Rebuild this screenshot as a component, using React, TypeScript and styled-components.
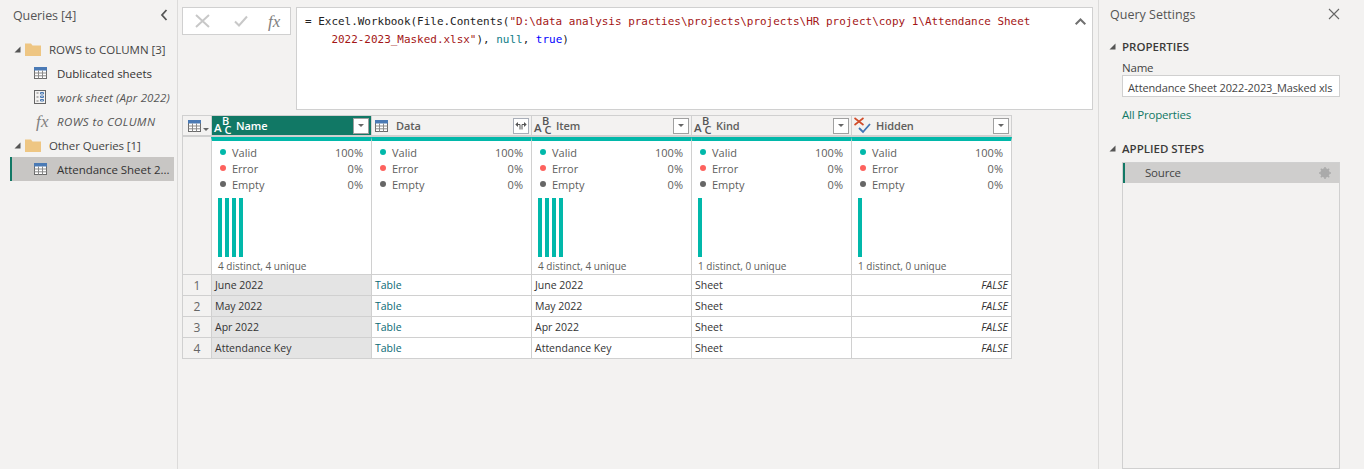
import React from "react";
import styled, { createGlobalStyle } from "styled-components";

const Global = createGlobalStyle`
  html, body { margin: 0; padding: 0; height: 469px; overflow: hidden; background: #f3f2f1; }
  #root { height: 469px; }
  * { box-sizing: border-box; }
  svg { overflow: visible; }
`;
const uiFont = `"Open Sans", "Noto Sans", "Liberation Sans", sans-serif`;
const borderC = "#d0d0d0";

const Page = styled.div`
  display: flex; height: 469px; width: 1364px; overflow: hidden;
  font-family: ${uiFont}; font-size: 11.5px; color: #333; background: #f3f2f1;
`;
const LeftPane = styled.aside`
  width: 178px; flex: none; border-right: 1px solid #dcdbda; padding: 0 3px 0 10px;
`;
const PaneHeader = styled.div`
  display: flex; align-items: center; justify-content: space-between; height: 30px;
  font-size: 12.5px; color: #555; margin-left: 3px; padding-right: 6px; letter-spacing: -0.1px;
`;
const Tree = styled.div`
  margin-top: 7px; display: flex; flex-direction: column;
`;
const FolderRow = styled.div<{ $track: number }>`
  display: flex; align-items: center; height: 24px; padding-left: 4px; gap: 4px; color: #444; white-space: nowrap;
  letter-spacing: ${p => p.$track}px;
  svg:nth-child(2) { margin-right: 4px; }
`;
const QueryRow = styled.div<{ $selected?: boolean; $italic?: boolean; $track: number }>`
  display: flex; align-items: center; height: 24px; padding-left: ${p => (p.$selected ? 22 : 24)}px; gap: 10px;
  white-space: nowrap; letter-spacing: ${p => p.$track}px; overflow: hidden;
  color: ${p => (p.$italic ? "#555" : "#333")};
  font-style: ${p => (p.$italic ? "italic" : "normal")};
  background: ${p => (p.$selected ? "#c8c6c4" : "transparent")};
  border-left: ${p => (p.$selected ? "2px solid #117865" : "none")};
`;
const Main = styled.main`
  width: 921px; flex: none; padding: 7px 5px 0 4px; display: flex; flex-direction: column; gap: 5px;
  border-right: 1px solid #dcdbda;
`;
const FormulaBar = styled.div`
  display: flex; gap: 5px; align-items: flex-start; height: 103px;
`;
const FormulaTools = styled.div`
  width: 109px; height: 28px; background: #fff; border: 1px solid ${borderC};
  display: flex; align-items: center; gap: 24px; padding: 0 0 0 12px;
  svg:last-child { margin-left: -4px; }
`;
const FormulaBox = styled.div`
  flex: 1; height: 103px; background: #fff; border: 1px solid ${borderC}; display: flex; justify-content: space-between;
  padding: 5px 6px 0 8px;
  > svg { margin-top: 5px; }
`;
const Code = styled.div`
  font-family: "DejaVu Sans Mono", "Liberation Mono", monospace; font-size: 10.96px; line-height: 18px; color: #222; white-space: pre;
`;
const Str = styled.span`color: #a31515;`;
const Kw = styled.span`color: #0000ff;`;
const Nul = styled.span`color: #0e7c86;`;
const Grid = styled.div`
  display: grid; grid-template-columns: 28px repeat(4, 160px) 161px; width: 830px;
  border-top: 1px solid ${borderC}; border-left: 1px solid ${borderC};
  grid-template-rows: 21px 138px repeat(4, 21px);
  align-self: flex-start;
`;
const CornerCell = styled.div`
  background: #f3f2f1; border-bottom: 2px solid ${borderC}; display: flex; align-items: center; padding-left: 5px; gap: 2px;
`;
const HeaderCell = styled.div<{ $active?: boolean }>`
  display: flex; align-items: center; padding: 0 1px 0 2px;
  background: ${p => (p.$active ? "#117865" : "#f3f2f1")};
  color: ${p => (p.$active ? "#fff" : "#605e5c")};
  border-left: 1px solid ${borderC};
  border-bottom: 2px solid ${borderC};
  font-weight: 600; font-size: 11px; letter-spacing: -0.1px;
  &:nth-child(6) { border-right: 1px solid ${borderC}; }
`;
const HeaderIcon = styled.span`display: flex; width: 20px; flex: none;`;
const HeaderLabel = styled.span`flex: 1; margin-left: 2px;`;
const FilterButton = styled.div`
  width: 16px; height: 16px; background: #fff; border: 1px solid #a0a0a0; margin-right: 1px; display: flex; align-items: center; justify-content: center;
`;
const ExpandButton = styled(FilterButton)`border-color: #a9aeb8;`;
const IndexProfile = styled.div`
  background: #f3f2f1; border-bottom: 1px solid ${borderC};
`;
const ProfileCell = styled.div<{ $last?: boolean }>`
  background: #fff; border-left: 1px solid ${borderC}; border-bottom: 1px solid ${borderC};
  border-right: ${p => (p.$last ? `1px solid ${borderC}` : "none")};
  border-top: 4px solid #01b8aa;
  display: flex; flex-direction: column; padding: 3px 8px 0 6px; font-size: 11px; color: #605e5c;
`;
const StatRow = styled.div`
  display: flex; align-items: center; height: 16px;
`;
const Dot = styled.span<{ $c: string }>`
  width: 6px; height: 6px; border-radius: 50%; background: ${p => p.$c}; margin: 0 6px 0 2px;
`;
const StatLabel = styled.span`flex: 1;`;
const Bars = styled.div`
  display: flex; gap: 3px; height: 59px; margin-top: 6px;
`;
const Bar = styled.span`width: 4px; background: #01b8aa;`;
const Distinct = styled.div`
  margin-top: 3px; font-size: 10px; color: #605e5c; white-space: nowrap; line-height: 13px;
`;
const RowNum = styled.div`
  background: #f3f2f1; border-bottom: 1px solid ${borderC}; color: #666; font-size: 12px; display: flex; align-items: center; justify-content: center;
`;
const DataCell = styled.div<{ $shaded?: boolean; $link?: boolean; $bool?: boolean; $last?: boolean }>`
  background: ${p => (p.$shaded ? "#e4e4e4" : "#fff")};
  border-left: 1px solid ${borderC}; border-bottom: 1px solid ${borderC};
  border-right: ${p => (p.$last ? `1px solid ${borderC}` : "none")};
  display: flex; align-items: center; padding: 0 3px; font-size: 10.5px;
  color: ${p => (p.$link ? "#0b6a75" : "#333")};
  justify-content: ${p => (p.$bool ? "flex-end" : "flex-start")};
  font-style: ${p => (p.$bool ? "italic" : "normal")};
`;
const RightPane = styled.aside`
  flex: 1; padding: 0 24px 0 10px; display: flex; flex-direction: column;
`;
const SettingsHeader = styled.div`
  display: flex; align-items: center; justify-content: space-between; height: 30px; margin-left: 1px; font-size: 12.5px; color: #555;
`;
const SectionHead = styled.div<{ $gap: number }>`
  display: flex; align-items: center; gap: 6px; font-weight: 600; font-size: 11.5px; color: #3b3a39; margin-top: ${p => p.$gap}px; height: 16px; letter-spacing: 0;
`;
const Body = styled.div`padding-left: 13px;`;
const FieldLabel = styled.div`font-size: 11.5px; color: #444; margin-top: 7px; line-height: 14px; letter-spacing: -0.2px;`;
const NameInput = styled.div`
  width: 218px; height: 22px; background: #fff; border: 1px solid ${borderC}; padding: 3px 5px 0;
  font-size: 11px; line-height: 17px; white-space: nowrap; overflow: hidden; color: #444; letter-spacing: -0.12px;
`;
const PropLink = styled.div`font-size: 11.5px; color: #117865; margin-top: 10px; line-height: 16px; letter-spacing: -0.2px;`;
const Steps = styled.div`
  width: 218px; height: 320px; background: #f3f2f1; border: 1px solid ${borderC}; margin: 5px 0 0 13px;
`;
const StepRow = styled.div`
  height: 20px; background: #cfcecd; border-left: 2px solid #117865; display: flex; align-items: center; justify-content: space-between;
  padding: 0 8px 0 20px; font-size: 11.5px; color: #444; letter-spacing: -0.2px;
`;
const CaretLow = styled.span`display: flex; align-self: flex-end; margin-bottom: 4px;`;
const TableHeaderIcon = styled.span`display: flex; margin-left: 1px;`;

const Caret = () => (
  <svg width="7" height="7" viewBox="0 0 7 7" style={{ flex: "none" }}><path d="M6.5 .5V6.5H.5z" fill="#555" /></svg>
);
const Folder = () => (
  <svg width="16" height="14" viewBox="0 0 16 14">
    <path d="M0 1.5h6l1.5 2H16V14H0z" fill="#eec683" />
  </svg>
);
const TableIcon = () => (
  <svg width="13" height="12" viewBox="0 0 13 12" style={{ flex: "none" }}>
    <rect x="0.5" y="0.5" width="12" height="11" fill="#fff" stroke="#6b6b6b" />
    <rect x="0" y="0" width="13" height="3.5" fill="#4a7ab5" />
    <path d="M4.5 3.5V11.5M8.5 3.5V11.5M0.5 6H12.5M0.5 8.8H12.5" stroke="#8a8a8a" strokeWidth="1" />
  </svg>
);
const SheetIcon = () => (
  <svg width="13" height="14" viewBox="0 0 13 14" style={{ flex: "none" }}>
    <rect x="0.5" y="0.5" width="11" height="13" fill="none" stroke="#666" />
    <path d="M2.5 3h2M2.5 7h2M2.5 11h2" stroke="#777" strokeWidth="1" />
    <path d="M6.5 2.5h3v1.5h-3zM6.5 6h3v1.5h-3zM6.5 9.5h3V11h-3z" fill="none" stroke="#4a7ab5" strokeWidth="1" />
  </svg>
);
const FxIcon = ({ x = 2 }: { x?: number }) => (
  <svg width="13" height="15" viewBox="0 0 13 15" style={{ flex: "none" }}>
    <text x={x} y="12.5" fontFamily="Liberation Serif, serif" fontStyle="italic" fontSize="17" fill="#808080">fx</text>
  </svg>
);
const Chevron = () => (
  <svg width="8" height="12" viewBox="0 0 8 12"><path d="M6.5 1L2 6l4.5 5" fill="none" stroke="#555" strokeWidth="1.8" /></svg>
);
const XMark = () => (
  <svg width="15" height="14" viewBox="0 0 15 14"><path d="M1 1L14 13M14 1L1 13" stroke="#c8c8c8" strokeWidth="2" /></svg>
);
const CheckMark = () => (
  <svg width="14" height="12" viewBox="0 0 14 12"><path d="M1 6.5L5 10.5L13 1.5" fill="none" stroke="#c8c8c8" strokeWidth="2" /></svg>
);
const ChevronUp = () => (
  <svg width="11" height="7" viewBox="0 0 11 7"><path d="M.7 6.3L5.5 1.5l4.8 4.8" fill="none" stroke="#707070" strokeWidth="2" /></svg>
);
const CloseThin = () => (
  <svg width="12" height="12" viewBox="0 0 12 12"><path d="M1 1L11 11M11 1L1 11" stroke="#666" strokeWidth="1.1" /></svg>
);
const AbcIcon = ({ light }: { light?: boolean }) => (
  <svg width="18" height="18" viewBox="0 0 18 18" style={{ flex: "none" }}>
    <g fontFamily="Open Sans, sans-serif" fill={light ? "#fff" : "#555"}>
      <text x="0" y="14.5" fontSize="11.5">A</text>
      <text x="8" y="7.5" fontSize="11">B</text>
      <text x="10.5" y="16.5" fontSize="11">C</text>
    </g>
  </svg>
);
const BoolIcon = () => (
  <svg width="18" height="18" viewBox="0 0 18 18" style={{ flex: "none" }}>
    <path d="M0.5 1L9.5 8M9.5 1L.5 8" stroke="#d04c2a" strokeWidth="1.6" />
    <path d="M5 11l4 4 7-8" fill="none" stroke="#3f75b5" strokeWidth="1.8" />
  </svg>
);
const MiniCaret = () => (
  <svg width="6" height="3" viewBox="0 0 6 3" style={{ flex: "none" }}><path d="M0 0h6L3 3z" fill="#666" /></svg>
);
const ExpandIcon = () => (
  <svg width="12" height="9" viewBox="0 0 12 9">
    <path d="M5 8.5V3.5H2.5M7 8.5V3.5H9.5" fill="none" stroke="#555" strokeWidth="1" />
    <path d="M0.3 3.5L3 1V6zM11.7 3.5L9 1V6z" fill="#555" />
  </svg>
);
const Gear = () => (
  <svg width="12" height="12" viewBox="0 0 12 12">
    <circle cx="6" cy="6" r="3.5" fill="none" stroke="#aaa" strokeWidth="2.4" />
    <path d="M6 0v12M0 6h12M1.8 1.8l8.4 8.4M10.2 1.8l-8.4 8.4" stroke="#aaa" strokeWidth="1.5" />
  </svg>
);

type Col = { name: string; icon: React.ReactNode; bars: number; distinct?: string; values: string[]; link?: boolean; bool?: boolean };
const months = ["June 2022", "May 2022", "Apr 2022", "Attendance Key"];
const cols: Col[] = [
  { name: "Name", icon: <AbcIcon light />, bars: 4, distinct: "4 distinct, 4 unique", values: months },
  { name: "Data", icon: <TableHeaderIcon><TableIcon /></TableHeaderIcon>, bars: 0, values: ["Table", "Table", "Table", "Table"], link: true },
  { name: "Item", icon: <AbcIcon />, bars: 4, distinct: "4 distinct, 4 unique", values: months },
  { name: "Kind", icon: <AbcIcon />, bars: 1, distinct: "1 distinct, 0 unique", values: ["Sheet", "Sheet", "Sheet", "Sheet"] },
  { name: "Hidden", icon: <BoolIcon />, bars: 1, distinct: "1 distinct, 0 unique", values: ["FALSE", "FALSE", "FALSE", "FALSE"], bool: true },
];

export default function App() {
  return (
    <Page>
      <Global />
      <LeftPane>
        <PaneHeader>Queries [4]<Chevron /></PaneHeader>
        <Tree>
          <FolderRow $track={0}><Caret /><Folder />ROWS to COLUMN [3]</FolderRow>
          <QueryRow $track={-0.05}><TableIcon />Dublicated sheets</QueryRow>
          <QueryRow $italic $track={0.13}><SheetIcon />work sheet (Apr 2022)</QueryRow>
          <QueryRow $italic $track={0.4}><FxIcon />ROWS to COLUMN</QueryRow>
          <FolderRow $track={-0.1}><Caret /><Folder />Other Queries [1]</FolderRow>
          <QueryRow $selected $track={-0.05}><TableIcon />Attendance Sheet 2...</QueryRow>
        </Tree>
      </LeftPane>
      <Main>
        <FormulaBar>
          <FormulaTools><XMark /><CheckMark /><FxIcon x={0} /></FormulaTools>
          <FormulaBox>
            <Code>
              {"= Excel.Workbook(File.Contents("}<Str>{'"D:\\data analysis practies\\projects\\projects\\HR project\\copy 1\\Attendance Sheet'}</Str>{"\n    "}
              <Str>{'2022-2023_Masked.xlsx"'}</Str>{"), "}<Nul>null</Nul>{", "}<Kw>true</Kw>{")"}
            </Code>
            <ChevronUp />
          </FormulaBox>
        </FormulaBar>
        <Grid>
          <CornerCell><TableIcon /><CaretLow><MiniCaret /></CaretLow></CornerCell>
          {cols.map((c, i) => (
            <HeaderCell key={c.name} $active={i === 0}>
              <HeaderIcon>{c.icon}</HeaderIcon>
              <HeaderLabel>{c.name}</HeaderLabel>
              {c.name === "Data"
                ? <ExpandButton><ExpandIcon /></ExpandButton>
                : <FilterButton><MiniCaret /></FilterButton>}
            </HeaderCell>
          ))}
          <IndexProfile />
          {cols.map((c, i) => (
            <ProfileCell key={c.name} $last={i === 4}>
              <StatRow><Dot $c="#01b8aa" /><StatLabel>Valid</StatLabel>100%</StatRow>
              <StatRow><Dot $c="#fd625e" /><StatLabel>Error</StatLabel>0%</StatRow>
              <StatRow><Dot $c="#666" /><StatLabel>Empty</StatLabel>0%</StatRow>
              {c.distinct && (
                <>
                  <Bars>{Array.from({ length: c.bars }).map((_, k) => <Bar key={k} />)}</Bars>
                  <Distinct>{c.distinct}</Distinct>
                </>
              )}
            </ProfileCell>
          ))}
          {[0, 1, 2, 3].map(r => (
            <React.Fragment key={r}>
              <RowNum>{r + 1}</RowNum>
              {cols.map((c, i) => (
                <DataCell key={c.name} $shaded={i === 0} $link={c.link} $bool={c.bool} $last={i === 4}>{c.values[r]}</DataCell>
              ))}
            </React.Fragment>
          ))}
        </Grid>
      </Main>
      <RightPane>
        <SettingsHeader>Query Settings<CloseThin /></SettingsHeader>
        <SectionHead $gap={10}><Caret />PROPERTIES</SectionHead>
        <Body>
          <FieldLabel>Name</FieldLabel>
          <NameInput>Attendance Sheet 2022-2023_Masked xls</NameInput>
          <PropLink>All Properties</PropLink>
        </Body>
        <SectionHead $gap={18}><Caret />APPLIED STEPS</SectionHead>
        <Steps><StepRow>Source<Gear /></StepRow></Steps>
      </RightPane>
    </Page>
  );
}
